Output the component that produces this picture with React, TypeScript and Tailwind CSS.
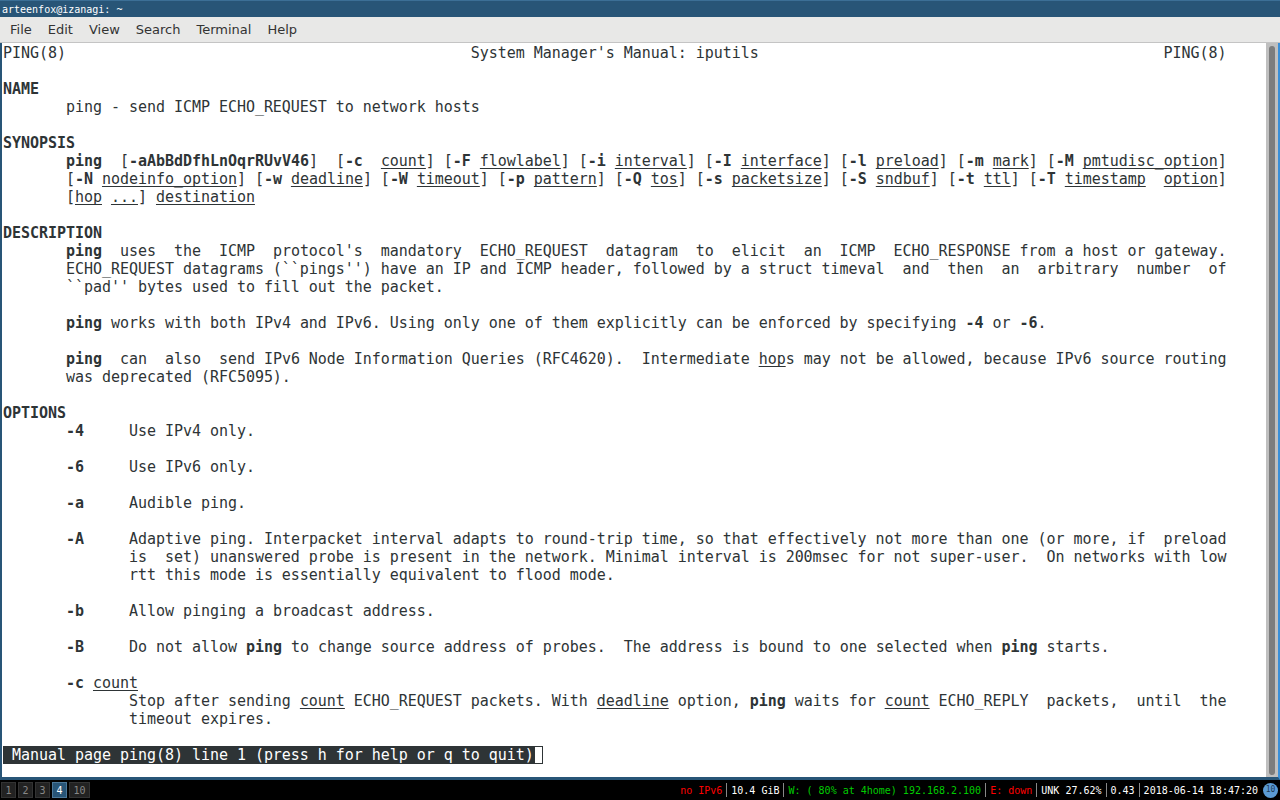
import type { ReactNode } from 'react';

const B = ({ children }: { children: ReactNode }) => <span className="font-bold">{children}</span>;
const U = ({ children }: { children: ReactNode }) => (
  <span className="underline underline-offset-2 [text-decoration-skip-ink:none]">{children}</span>
);

const menu = ['File', 'Edit', 'View', 'Search', 'Terminal', 'Help'];

const workspaces = [
  { label: '1', w: 'w-[15px]' },
  { label: '2', w: 'w-[15px]' },
  { label: '3', w: 'w-[15px]' },
  { label: '4', w: 'w-[15px]', active: true },
  { label: '10', w: 'w-[21px]' },
];

function Line({ children }: { children?: ReactNode }) {
  return <div className="h-[18px] whitespace-pre leading-[18px]">{children ?? ' '}</div>;
}

function Sep() {
  return <span className="mx-[4px] h-[14px] w-px bg-[#888888]" />;
}

export default function App() {
  return (
    <div className="flex h-[800px] w-[1280px] flex-col overflow-hidden bg-black">
      <div className="flex h-[17px] items-center border-t border-[#3c6f96] bg-[#285577] pl-[2px] font-['DejaVu_Sans_Mono',monospace] text-[10px] text-[#ffffff]">
        arteenfox@izanagi: ~
      </div>
      <div className="flex h-[26px] items-center gap-[16px] border-b border-[#c4c4c4] bg-[#e8e8e7] pl-[10px] font-['DejaVu_Sans',sans-serif] text-[13px] text-[#333333]">
        {menu.map((item) => (
          <span key={item}>{item}</span>
        ))}
      </div>
      <div className="flex min-h-0 flex-1 border-x-2 border-b-[3px] border-[#285577] border-r-[#3a8fd8] bg-white">
        <div className="min-w-0 flex-1 pl-px pt-[1px] font-['DejaVu_Sans_Mono',monospace] text-[15px] tracking-[-0.035px] text-[#2e3436]">
          <Line>PING(8)                                             System Manager's Manual: iputils                                             PING(8)</Line>
          <Line />
          <Line><B>NAME</B></Line>
          <Line>       ping - send ICMP ECHO_REQUEST to network hosts</Line>
          <Line />
          <Line><B>SYNOPSIS</B></Line>
          <Line>       <B>ping</B>  [<B>-aAbBdDfhLnOqrRUvV46</B>]  [<B>-c</B>  <U>count</U>] [<B>-F</B> <U>flowlabel</U>] [<B>-i</B> <U>interval</U>] [<B>-I</B> <U>interface</U>] [<B>-l</B> <U>preload</U>] [<B>-m</B> <U>mark</U>] [<B>-M</B> <U>pmtudisc_option</U>]</Line>
          <Line>       [<B>-N</B> <U>nodeinfo_option</U>] [<B>-w</B> <U>deadline</U>] [<B>-W</B> <U>timeout</U>] [<B>-p</B> <U>pattern</U>] [<B>-Q</B> <U>tos</U>] [<B>-s</B> <U>packetsize</U>] [<B>-S</B> <U>sndbuf</U>] [<B>-t</B> <U>ttl</U>] [<B>-T</B> <U>timestamp</U>  <U>option</U>]</Line>
          <Line>       [<U>hop</U> <U>...</U>] <U>destination</U></Line>
          <Line />
          <Line><B>DESCRIPTION</B></Line>
          <Line>       <B>ping</B>  uses  the  ICMP  protocol's  mandatory  ECHO_REQUEST  datagram  to  elicit  an  ICMP  ECHO_RESPONSE from a host or gateway.</Line>
          <Line>       ECHO_REQUEST datagrams (``pings'') have an IP and ICMP header, followed by a struct timeval  and  then  an  arbitrary  number  of</Line>
          <Line>       ``pad'' bytes used to fill out the packet.</Line>
          <Line />
          <Line>       <B>ping</B> works with both IPv4 and IPv6. Using only one of them explicitly can be enforced by specifying <B>-4</B> or <B>-6</B>.</Line>
          <Line />
          <Line>       <B>ping</B>  can  also  send IPv6 Node Information Queries (RFC4620).  Intermediate <U>hop</U>s may not be allowed, because IPv6 source routing</Line>
          <Line>       was deprecated (RFC5095).</Line>
          <Line />
          <Line><B>OPTIONS</B></Line>
          <Line>       <B>-4</B>     Use IPv4 only.</Line>
          <Line />
          <Line>       <B>-6</B>     Use IPv6 only.</Line>
          <Line />
          <Line>       <B>-a</B>     Audible ping.</Line>
          <Line />
          <Line>       <B>-A</B>     Adaptive ping. Interpacket interval adapts to round-trip time, so that effectively not more than one (or more, if  preload</Line>
          <Line>              is  set) unanswered probe is present in the network. Minimal interval is 200msec for not super-user.  On networks with low</Line>
          <Line>              rtt this mode is essentially equivalent to flood mode.</Line>
          <Line />
          <Line>       <B>-b</B>     Allow pinging a broadcast address.</Line>
          <Line />
          <Line>       <B>-B</B>     Do not allow <B>ping</B> to change source address of probes.  The address is bound to one selected when <B>ping</B> starts.</Line>
          <Line />
          <Line>       <B>-c</B> <U>count</U></Line>
          <Line>              Stop after sending <U>count</U> ECHO_REQUEST packets. With <U>deadline</U> option, <B>ping</B> waits for <U>count</U> ECHO_REPLY  packets,  until  the</Line>
          <Line>              timeout expires.</Line>
          <Line />
          <div className="flex h-[18px] items-center leading-[18px]">
            <span className="whitespace-pre bg-[#2e3436] text-white"> Manual page ping(8) line 1 (press h for help or q to quit)</span>
            <span className="h-[18px] w-[9px] border border-[#2e3436]" />
          </div>
        </div>
        <div className="flex w-[12px] shrink-0 justify-center bg-[#bfbfbf] pt-[3px]">
          <div className="h-[729px] w-[6px] rounded-full bg-[#7d7d7d]" />
        </div>
      </div>
      <div className="flex h-[20px] shrink-0 items-center bg-black font-['DejaVu_Sans_Mono',monospace] text-[10px]">
        <div className="flex h-[18px] items-center pl-px">
          {workspaces.map((ws) => (
            <span
              key={ws.label}
              className={`mr-[2px] flex h-[16px] items-center justify-center border ${ws.w} ${
                ws.active ? 'border-[#4c7899] bg-[#285577] text-white' : 'border-[#333333] bg-[#222222] text-[#888888]'
              }`}
            >
              {ws.label}
            </span>
          ))}
        </div>
        <div className="ml-auto flex items-center whitespace-pre pr-[2px]">
          <span className="text-[#ff0000]">no IPv6</span>
          <Sep />
          <span className="text-white">10.4 GiB</span>
          <Sep />
          <span className="text-[#00cc00]">W: ( 80% at 4home) 192.168.2.100</span>
          <Sep />
          <span className="text-[#ff0000]">E: down</span>
          <Sep />
          <span className="text-white">UNK 27.62%</span>
          <Sep />
          <span className="text-white">0.43</span>
          <Sep />
          <span className="text-white">2018-06-14 18:47:20</span>
          <span className="ml-[5px] flex h-[15px] w-[15px] items-center justify-center rounded-full bg-[#5b9bd5] text-[8px] text-[#1d3c5a]">10</span>
        </div>
      </div>
    </div>
  );
}
